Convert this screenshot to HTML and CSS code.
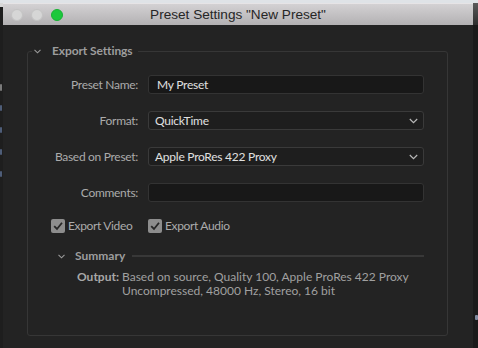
FILE: index.html
```html
<!DOCTYPE html>
<html>
<head>
<meta charset="utf-8">
<link rel="stylesheet" href="styles.css">
</head>
<body>
<div class="screen">
  <div class="topstrip"></div>
  <div class="desk">
    <div class="sliver sliver-left">
      <span class="frag frag-a"></span>
      <span class="frag"></span>
      <span class="frag"></span>
      <span class="frag"></span>
      <span class="frag"></span>
    </div>
    <div class="window">
      <div class="titlebar">
        <div class="lights">
          <span class="light"></span>
          <span class="light"></span>
          <span class="light light-green"></span>
        </div>
        <div class="title">Preset Settings "New Preset"</div>
        <div></div>
      </div>
      <div class="body">
        <fieldset class="group">
          <legend class="group-legend">
            <svg class="chev" width="7" height="5" viewBox="0 0 7 5"><path d="M0.5 0.8 L3.5 3.8 L6.5 0.8" fill="none" stroke="#9a9a9a" stroke-width="1.1"/></svg>
            <span>Export Settings</span>
          </legend>
          <div class="form">
            <div class="label">Preset Name:</div>
            <div class="field field-input">My Preset</div>

            <div class="label">Format:</div>
            <div class="field field-select"><span>QuickTime</span>
              <svg class="select-chev" width="9" height="6" viewBox="0 0 9 6"><path d="M0.8 1 L4.5 4.6 L8.2 1" fill="none" stroke="#b8b8b8" stroke-width="1.2"/></svg>
            </div>

            <div class="label">Based on Preset:</div>
            <div class="field field-select"><span>Apple ProRes 422 Proxy</span>
              <svg class="select-chev" width="9" height="6" viewBox="0 0 9 6"><path d="M0.8 1 L4.5 4.6 L8.2 1" fill="none" stroke="#b8b8b8" stroke-width="1.2"/></svg>
            </div>

            <div class="label">Comments:</div>
            <div class="field field-input"></div>

            <div class="check check-first">
              <span class="box"><svg width="14" height="14" viewBox="0 0 14 14"><path d="M3.2 7.2 L6 10 L11 3.8" fill="none" stroke="#262626" stroke-width="1.8"/></svg></span>
              <span>Export Video</span>
            </div>
            <div class="check">
              <span class="box"><svg width="14" height="14" viewBox="0 0 14 14"><path d="M3.2 7.2 L6 10 L11 3.8" fill="none" stroke="#262626" stroke-width="1.8"/></svg></span>
              <span>Export Audio</span>
            </div>
          </div>

          <div class="summary-head">
            <svg class="chev" width="7" height="5" viewBox="0 0 7 5"><path d="M0.5 0.8 L3.5 3.8 L6.5 0.8" fill="none" stroke="#9a9a9a" stroke-width="1.1"/></svg>
            <span class="summary-title">Summary</span>
            <span class="summary-line"></span>
          </div>
          <div class="output">
            <span class="output-label">Output:</span>
            <div class="output-value">
              <div>Based on source, Quality 100, Apple ProRes 422 Proxy</div>
              <div>Uncompressed, 48000 Hz, Stereo, 16 bit</div>
            </div>
          </div>
        </fieldset>
      </div>
    </div>
    <div class="sliver sliver-right">
      <span class="frag frag-o"></span>
    </div>
  </div>
</div>
</body>
</html>
```

FILE: styles.css
```css
* { box-sizing: border-box; }
html, body { margin: 0; padding: 0; }
body {
  width: 478px;
  height: 348px;
  overflow: hidden;
  background: #1c1c1c;
  font-family: "Lato", "Liberation Sans", sans-serif;
  font-size: 12px;
}
.screen { width: 478px; height: 348px; display: flex; flex-direction: column; }
.topstrip { height: 3px; background: #dfe3e7; flex: none; }
.desk { flex: 1; display: flex; min-height: 0; }

.sliver { flex: none; display: flex; flex-direction: column; overflow: hidden; }
.sliver-left {
  width: 3px;
  background: linear-gradient(#d8d8d8 0, #d8d8d8 4px, #1e1e1e 4px);
  padding-top: 81px;
  gap: 16px;
}
.frag { display: block; width: 2px; height: 6px; background: #4e5d78; border-radius: 1px; }
.frag-a { background: #7a7a7a; height: 7px; margin-bottom: -2px; }
.sliver-right {
  width: 5px;
  background: linear-gradient(#5a5a5a 0, #2e2e2e 22px, #1a1a1a 22px);
  padding-top: 312px;
}
.frag-o { margin-left: 2px; width: 3px; height: 5px; background: #7f8aa0; }

.window { width: 470px; display: flex; flex-direction: column; background: #232323; }
.titlebar {
  height: 22px;
  flex: none;
  display: grid;
  grid-template-columns: 1fr auto 1fr;
  align-items: center;
  background: linear-gradient(#d3d1d3, #b3b1b3);
  border-top: 1px solid #e6e4e6;
}
.lights { display: flex; gap: 8px; padding-left: 8px; }
.light {
  width: 12px; height: 12px; border-radius: 50%;
  background: #d6d6d6;
  border: 1px solid #c4c4c4;
}
.light-green { background: #1cc83c; border-color: #17b233; }
.title {
  font-family: "Liberation Sans", "Helvetica", sans-serif;
  font-size: 13.6px;
  color: #262626;
  line-height: 20px;
}

.body { flex: 1; padding: 0; }
.group {
  margin: 19px 25px 0 24px;
  height: 292px;
  min-width: 0;
  padding: 17px 0 0 0;
  border: 1px solid #363636;
  border-radius: 3px;
}
.group-legend {
  margin-left: 4px;
  padding: 0 5px 0 2px;
  display: flex;
  align-items: center;
  gap: 11px;
  height: 14px;
  line-height: 14px;
  font-weight: 700;
  color: #9d9d9d;
  letter-spacing: -0.1px;
}
.chev { display: block; flex: none; }

.form {
  display: grid;
  grid-template-columns: 110px 276px;
  column-gap: 10px;
  row-gap: 17px;
  align-items: center;
}
.label {
  text-align: right;
  color: #ababab;
  line-height: 19px;
  letter-spacing: -0.3px;
}
.field {
  height: 19px;
  border-radius: 3px;
  color: #e0e0e0;
  line-height: 17px;
  letter-spacing: -0.25px;
}
.field-input {
  background: #181818;
  border: 1px solid #333333;
  padding-left: 8px;
}
.field-select {
  background: #1e1e1e;
  border: 1px solid #3a3a3a;
  padding: 0 5px 0 6px;
  display: flex;
  align-items: center;
  justify-content: space-between;
}
.select-chev { display: block; }

.check {
  display: flex;
  align-items: center;
  gap: 3px;
  color: #ababab;
  line-height: 14px;
  letter-spacing: -0.35px;
}
.check-first { padding-left: 23px; }
.box {
  width: 14px; height: 14px;
  border-radius: 2px;
  background: #8d8d8d;
  display: block;
}
.box svg { display: block; }

.summary-head {
  margin-top: 16px;
  height: 14px;
  display: flex;
  align-items: center;
  padding-left: 30px;
  padding-right: 23px;
}
.summary-title {
  margin-left: 10px;
  font-weight: 700;
  color: #9d9d9d;
  line-height: 14px;
}
.summary-line {
  flex: 1;
  height: 2px;
  background: #383838;
  margin-left: 7px;
}
.output {
  margin-top: 7px;
  display: flex;
  gap: 3px;
  padding-left: 49px;
  line-height: 14px;
  color: #a0a0a0;
}
.output-label { font-weight: 700; color: #a8a8a8; }
```
